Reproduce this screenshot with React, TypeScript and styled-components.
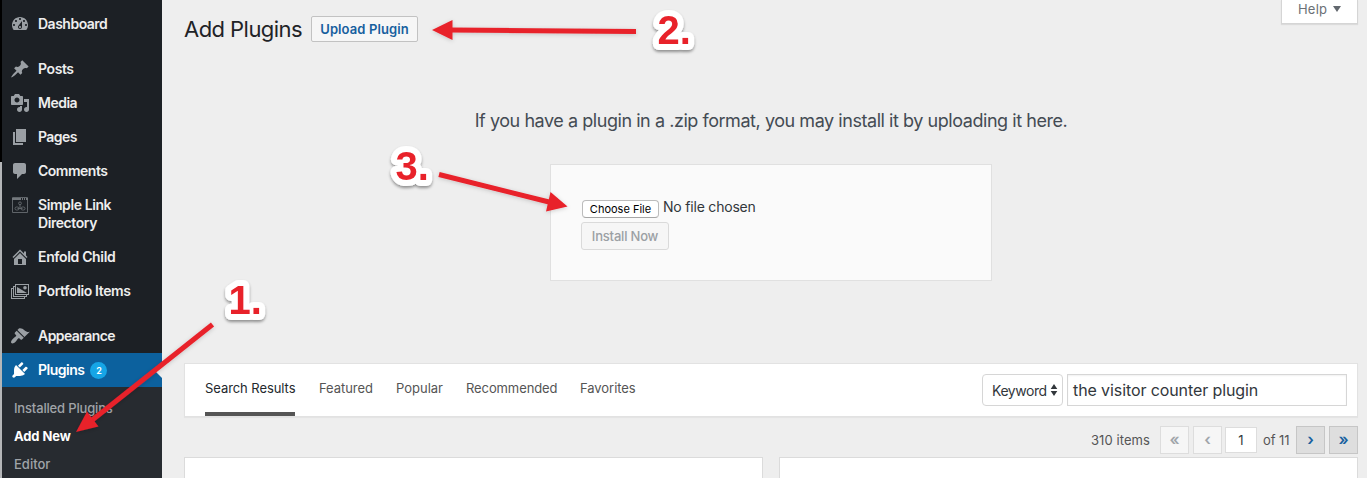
import React from "react";
import styled, { createGlobalStyle } from "styled-components";

const GlobalStyle = createGlobalStyle`
  * { box-sizing: border-box; }
  body {
    margin: 0;
    background: #fff;
    font-family: Inter, "Open Sans", sans-serif;
    font-size: 13px;
    color: #444;
    overflow: hidden;
  }
`;

const Screen = styled.div`
  position: relative;
  display: flex;
  width: 1367px;
  height: 478px;
  overflow: hidden;
  background: #eee;
`;

const Edge = styled.div`
  width: 2px;
  flex: none;
  background: linear-gradient(#000 0 162px, #b4b6b8 162px);
`;

const Sidebar = styled.nav`
  width: 160px;
  flex: none;
  padding-top: 7px;
  background: #1c2025;
`;

const MenuItem = styled.a<{ $active?: boolean; $gap?: boolean }>`
  position: relative;
  display: flex;
  margin-top: ${(p) => (p.$gap ? 11 : 0)}px;
  padding: 8px 0 8px 8px;
  line-height: 18px;
  font-size: 14px;
  font-weight: 600;
  color: ${(p) => (p.$active ? "#fff" : "#eee")};
  background: ${(p) => (p.$active ? "#0c619e" : "transparent")};
`;

const MenuIcon = styled.svg<{ $active?: boolean }>`
  flex: none;
  width: 20px;
  height: 20px;
  margin: -1px 8px -1px 0;
  fill: ${(p) => (p.$active ? "#fff" : "#9a9fa4")};
`;

const Label = styled.span<{ $ls?: number }>`
  white-space: pre-line;
  letter-spacing: ${(p) => p.$ls ?? 0}px;
`;

const Count = styled.span`
  width: 17px;
  height: 17px;
  margin: 1px 0 0 6px;
  border-radius: 50%;
  background: #16a5e6;
  color: #fff;
  font-size: 9px;
  font-weight: 600;
  line-height: 17px;
  text-align: center;
`;

const Notch = styled.span`
  position: absolute;
  right: 0;
  top: 9px;
  border: 8px solid transparent;
  border-right-color: #eee;
`;

const Submenu = styled.div`
  height: 91px;
  padding: 7px 0 0 12px;
  background: #272b30;
`;

const SubItem = styled.a<{ $current?: boolean; $ls: number }>`
  display: block;
  height: 28px;
  line-height: 28px;
  font-size: 13px;
  font-weight: ${(p) => (p.$current ? 700 : 500)};
  letter-spacing: ${(p) => p.$ls}px;
  color: ${(p) => (p.$current ? "#fff" : "#a0a4a8")};
`;

const Main = styled.main`
  flex: 1;
  display: flex;
  flex-direction: column;
  padding: 0 9px 0 22px;
`;

const Header = styled.header`
  display: flex;
  height: 164px;
  flex-direction: column;
`;

const TitleRow = styled.div`
  display: flex;
  height: 58px;
  align-items: flex-start;
`;

const Title = styled.h1`
  width: 127px;
  margin: 14px 0 0;
  font-size: 22px;
  font-weight: 400;
  line-height: 30px;
  letter-spacing: -0.55px;
  white-space: nowrap;
  color: #1f2327;
`;

const UploadButton = styled.button`
  width: 107px;
  height: 26px;
  margin: 16px auto 0 0;
  padding: 0;
  border: 1px solid #c2c2c2;
  border-radius: 2px;
  background: #f6f6f6;
  color: #17609e;
  font: 600 13px Inter, sans-serif;
  letter-spacing: 0.1px;
`;

const HelpTab = styled.button`
  display: flex;
  align-items: center;
  gap: 6px;
  width: 77px;
  height: 24px;
  padding: 0 0 5px 16px;
  border: 1px solid #d5d5d5;
  border-top: 0;
  background: #fff;
  box-shadow: 0 1px 1px rgba(0, 0, 0, 0.08);
  color: #6b7076;
  font: 400 13px Inter, sans-serif;
  letter-spacing: 0.2px;
`;

const Caret = styled.span`
  border: 4px solid transparent;
  border-top: 6px solid #62686e;
  border-bottom: 0;
`;

const Message = styled.p`
  margin: 50px 0 0;
  line-height: 26px;
  font-size: 18px;
  letter-spacing: -0.45px;
  text-align: center;
  white-space: nowrap;
  color: #444b53;
`;

const UploadBox = styled.section`
  width: 442px;
  height: 117px;
  flex: none;
  align-self: center;
  padding: 34px 30px;
  border: 1px solid #e0e0e0;
  background: #fafafa;
`;

const FileRow = styled.div`
  display: flex;
  height: 23px;
  padding: 1px 0 0 1px;
`;

const ChooseFile = styled.button`
  width: 77px;
  height: 18px;
  margin: 0 4px 0 0;
  padding: 0;
  border: 1px solid #bcbcbc;
  border-bottom-color: #a6a6a6;
  border-radius: 4px;
  background: #fff;
  color: #000;
  font: 400 11px/14px Inter, sans-serif;
`;

const FileName = styled.span`
  margin-top: -2px;
  line-height: 18px;
  font-size: 14px;
  letter-spacing: -0.2px;
  color: #32373c;
`;

const InstallButton = styled.button`
  display: block;
  width: 88px;
  height: 28px;
  margin: 0;
  padding: 0;
  border: 1px solid #dadada;
  border-radius: 3px;
  background: #f6f6f6;
  color: #9ba0a4;
  font: 500 13px Inter, sans-serif;
  letter-spacing: -0.2px;
`;

const FilterBar = styled.div`
  display: flex;
  align-items: flex-start;
  height: 54px;
  flex: none;
  margin-top: 82px;
  padding: 0 10px 0 20px;
  border: 1px solid #e2e2e2;
  background: #fff;
  box-shadow: 0 1px 1px rgba(0, 0, 0, 0.04);
`;

const Tab = styled.a<{ $current?: boolean; $w: number; $ls: number }>`
  width: ${(p) => p.$w}px;
  height: 52px;
  margin-right: 24px;
  line-height: 49px;
  white-space: nowrap;
  letter-spacing: ${(p) => p.$ls}px;
  color: ${(p) => (p.$current ? "#23282d" : "#555")};
  border-bottom: ${(p) => (p.$current ? "4px solid #555" : "0")};
`;

const KeywordSelect = styled.div`
  display: flex;
  align-items: center;
  justify-content: space-between;
  width: 81px;
  height: 32px;
  margin: 10px 4px 0 auto;
  padding: 0 4px 0 9px;
  border: 1px solid #d6d6d6;
  border-radius: 4px;
  background: #fff;
  font-size: 14px;
  letter-spacing: -0.45px;
  color: #32373c;
`;

const SearchField = styled.div`
  width: 280px;
  height: 32px;
  margin-top: 10px;
  padding-left: 5px;
  border: 1px solid #d6d6d6;
  background: #fff;
  box-shadow: inset 0 1px 2px rgba(0, 0, 0, 0.06);
  font-size: 16px;
  line-height: 30px;
  letter-spacing: -0.1px;
  color: #32373c;
`;

const Pager = styled.div`
  display: flex;
  align-items: center;
  justify-content: flex-end;
  height: 28px;
  margin: 9px 0 3px;
  color: #555;
`;

const PageButton = styled.span<{ $off?: boolean }>`
  width: 29px;
  height: 28px;
  margin-left: 4px;
  border: 1px solid ${(p) => (p.$off ? "#ddd" : "#c6c6c6")};
  background: ${(p) => (p.$off ? "#f6f6f6" : "#dedede")};
  color: ${(p) => (p.$off ? "#a0a5aa" : "#17609e")};
  font-size: 16px;
  font-weight: 600;
  line-height: 24px;
  text-align: center;
`;

const PageCount = styled.span`
  margin-right: 6px;
  letter-spacing: 0.08px;
`;

const PageInput = styled.span`
  width: 32px;
  height: 26px;
  margin: 0 6px 0 3px;
  border: 1px solid #ddd;
  background: #fff;
  line-height: 24px;
  text-align: center;
  color: #32373c;
`;

const PageTotal = styled.span`
  width: 29px;
  white-space: nowrap;
  letter-spacing: -0.1px;
`;

const Cards = styled.div`
  display: flex;
  gap: 16px;
  flex: 1;
`;

const Card = styled.article`
  flex: 1;
  border: 1px solid #dbdbdb;
  border-bottom: 0;
  background: #fff;
`;

const Annotations = styled.svg`
  position: absolute;
  inset: 0;
  pointer-events: none;
`;

const StepNumber = styled.text`
  font: 700 40px "Liberation Sans", Arial, sans-serif;
  paint-order: stroke;
  stroke: #fff;
  stroke-width: 12px;
  stroke-linejoin: round;
  fill: #e8202a;
`;

const ICONS = {
  dashboard:
    "M3.76 16h12.48c1.1-1.37 1.76-3.11 1.76-5 0-4.42-3.58-8-8-8s-8 3.58-8 8c0 1.89.66 3.63 1.76 5zM10 4c.55 0 1 .45 1 1s-.45 1-1 1-1-.45-1-1 .45-1 1-1zM6 6c.55 0 1 .45 1 1s-.45 1-1 1-1-.45-1-1 .45-1 1-1zm8 0c.55 0 1 .45 1 1s-.45 1-1 1-1-.45-1-1 .45-1 1-1zm-5.37 5.55L12 7v6c0 1.1-.9 2-2 2s-2-.9-2-2c0-.57.24-1.08.63-1.45zM4 10c.55 0 1 .45 1 1s-.45 1-1 1-1-.45-1-1 .45-1 1-1zm12 0c.55 0 1 .45 1 1s-.45 1-1 1-1-.45-1-1 .45-1 1-1zm-5 3c0-.55-.45-1-1-1s-1 .45-1 1 .45 1 1 1 1-.45 1-1z",
  post: "M10.44 3.02l1.82-1.82 6.36 6.35-1.83 1.82c-1.05-.68-2.48-.57-3.41.36l-.75.75c-.92.93-1.04 2.35-.35 3.41l-1.83 1.82-2.41-2.41-2.8 2.79c-.42.42-3.38 2.71-3.8 2.29s1.86-3.39 2.28-3.81l2.79-2.79L4.1 9.36l1.83-1.82c1.05.69 2.48.57 3.4-.36l.75-.75c.93-.92 1.05-2.35.36-3.41z",
  media:
    "M13 11V4c0-.55-.45-1-1-1h-1.67L9 1H5L3.67 3H2c-.55 0-1 .45-1 1v7c0 .55.45 1 1 1h10c.55 0 1-.45 1-1zM7 4.5c1.38 0 2.5 1.12 2.5 2.5S8.38 9.5 7 9.5 4.5 8.38 4.5 7 5.62 4.5 7 4.5zM14 6h5v10.5c0 1.38-1.12 2.5-2.5 2.5S14 17.88 14 16.5s1.12-2.5 2.5-2.5c.17 0 .34.02.5.05V9h-3V6zm-4 8.05V13h2v3.5c0 1.38-1.12 2.5-2.5 2.5S7 17.88 7 16.5 8.12 14 9.5 14c.17 0 .34.02.5.05z",
  page: "M6 15V2h10v13H6zm-1 1h8v2H3V5h2v11z",
  comments:
    "M5 2h9c1.1 0 2 .9 2 2v7c0 1.1-.9 2-2 2h-2l-5 5v-5H5c-1.1 0-2-.9-2-2V4c0-1.1.9-2 2-2z",
  home: "M16 8.5l1.53 1.53-1.06 1.06L10 4.6l-6.47 6.49-1.06-1.06L10 2.5l4 4v-2h2v4zm-6-2.46l6 5.99V18H4v-5.97zM12 17v-5H8v5h4z",
  images:
    "M5 3h14v11h-2v2h-2v2H1V7h2V5h2V3zm13 10V4H6v9h12zm-2 2v-1H5V6H4v9h12zm-2 2v-1H3V8H2v9h12zM7 6l10 6H7V6zm8-1a1.8 1.8 0 1 1 0 3.6 1.8 1.8 0 0 1 0-3.6z",
  appearance:
    "M14.48 11.06L7.41 3.99l1.5-1.5c.5-.56 2.3-.47 3.51.32 1.21.8 1.43 1.28 2.91 2.1 1.18.64 2.45 1.26 4.45.85zm-.71.71L6.7 4.7 4.93 6.47c-.39.39-.39 1.02 0 1.41l1.06 1.06c.39.39.39 1.03 0 1.42-.6.6-1.43 1.11-2.21 1.69-.35.26-.7.53-1.01.84C1.43 14.23.4 16.08 1.4 17.07c.99 1 2.84-.03 4.18-1.36.31-.31.58-.66.85-1.02.57-.78 1.08-1.61 1.69-2.21.39-.39 1.02-.39 1.41 0l1.06 1.06c.39.39 1.02.39 1.41 0z",
  plugins:
    "M13.11 4.36L9.87 7.6 8 5.73l3.24-3.24c.35-.34 1.05-.2 1.56.32.52.51.66 1.21.31 1.55zm-8 1.77l.91-1.12 9.01 9.01-1.19.84c-.71.71-2.63 1.16-3.82 1.16H6.14L4.9 17.26c-.59.59-1.54.59-2.12 0-.59-.58-.59-1.53 0-2.12l1.24-1.24v-3.88c0-1.13.4-3.19 1.09-3.89zm7.26 3.97l3.24-3.24c.34-.35 1.04-.21 1.55.31.52.51.66 1.21.31 1.55l-3.24 3.25z",
};

function DirectoryIcon() {
  return (
    <MenuIcon viewBox="0 0 20 20">
      <g fill="none" stroke="#5f6469">
        <path d="M2.5 2.5h15v15h-15z" />
        <path d="M2 4h16" stroke="#73787d" strokeWidth="2" strokeDasharray="9 1 1 1 1 1 2" />
        <circle cx="10" cy="8.3" r="1.4" />
        <path d="M10 10v3M7.5 13.5h5" />
        <rect x="5" y="12" width="4" height="3" rx="1.5" />
        <rect x="11" y="12" width="4" height="3" rx="1.5" />
      </g>
    </MenuIcon>
  );
}

type Entry = { label: string; icon: keyof typeof ICONS | null; ls: number; gap?: boolean };

const MENU: Entry[] = [
  { label: "Dashboard", icon: "dashboard", ls: -0.5 },
  { label: "Posts", icon: "post", ls: -0.4, gap: true },
  { label: "Media", icon: "media", ls: -0.5 },
  { label: "Pages", icon: "page", ls: -0.55 },
  { label: "Comments", icon: "comments", ls: -0.5 },
  { label: "Simple Link\nDirectory", icon: null, ls: -0.42 },
  { label: "Enfold Child", icon: "home", ls: -0.35 },
  { label: "Portfolio Items", icon: "images", ls: -0.38 },
  { label: "Appearance", icon: "appearance", ls: -0.55, gap: true },
];

const TABS = [
  { label: "Search Results", w: 90, ls: -0.07 },
  { label: "Featured", w: 53, ls: -0.05 },
  { label: "Popular", w: 46, ls: 0 },
  { label: "Recommended", w: 90, ls: -0.1 },
  { label: "Favorites", w: 55, ls: -0.05 },
];

export default function App() {
  return (
    <>
      <GlobalStyle />
      <Screen>
        <Edge />
        <Sidebar>
          {MENU.map((m) => (
            <MenuItem key={m.label} $gap={m.gap}>
              {m.icon ? (
                <MenuIcon viewBox="0 0 20 20">
                  <path fillRule="evenodd" d={ICONS[m.icon]} />
                </MenuIcon>
              ) : (
                <DirectoryIcon />
              )}
              <Label $ls={m.ls}>{m.label}</Label>
            </MenuItem>
          ))}
          <MenuItem $active>
            <MenuIcon $active viewBox="0 0 20 20">
              <path d={ICONS.plugins} />
            </MenuIcon>
            <Label $ls={-0.5}>Plugins</Label>
            <Count>2</Count>
            <Notch />
          </MenuItem>
          <Submenu>
            <SubItem $ls={-0.17}>Installed Plugins</SubItem>
            <SubItem $current $ls={-0.12}>Add New</SubItem>
            <SubItem $ls={0}>Editor</SubItem>
          </Submenu>
        </Sidebar>
        <Main>
          <Header>
            <TitleRow>
              <Title>Add Plugins</Title>
              <UploadButton>Upload Plugin</UploadButton>
              <HelpTab>
                Help <Caret />
              </HelpTab>
            </TitleRow>
            <Message>
              If you have a plugin in a .zip format, you may install it by uploading it here.
            </Message>
          </Header>
          <UploadBox>
            <FileRow>
              <ChooseFile>Choose File</ChooseFile>
              <FileName>No file chosen</FileName>
            </FileRow>
            <InstallButton>Install Now</InstallButton>
          </UploadBox>
          <FilterBar>
            {TABS.map((t, i) => (
              <Tab key={t.label} $current={i === 0} $w={t.w} $ls={t.ls}>
                {t.label}
              </Tab>
            ))}
            <KeywordSelect>
              Keyword
              <svg width="8" height="12" viewBox="0 0 8 12" fill="#32373c">
                <path d="M4 0l3.300 5H.7zM4 12L.7 7h6.600z" />
              </svg>
            </KeywordSelect>
            <SearchField>the visitor counter plugin</SearchField>
          </FilterBar>
          <Pager>
            <PageCount>310 items</PageCount>
            <PageButton $off>«</PageButton>
            <PageButton $off>‹</PageButton>
            <PageInput>1</PageInput>
            <PageTotal>of 11</PageTotal>
            <PageButton>›</PageButton>
            <PageButton>»</PageButton>
          </Pager>
          <Cards>
            <Card />
            <Card />
          </Cards>
        </Main>
        <Annotations width="1367" height="478">
          <defs>
            <filter id="lift" x="-30%" y="-30%" width="160%" height="170%">
              <feDropShadow dx="0" dy="2" stdDeviation="1.8" floodOpacity="0.4" />
            </filter>
            <filter id="soft" filterUnits="userSpaceOnUse" x="0" y="0" width="1367" height="478">
              <feDropShadow dx="0" dy="1" stdDeviation="2" floodOpacity="0.18" />
            </filter>
          </defs>
          <g filter="url(#soft)" fill="#e8202a" stroke="#e8202a">
            <path d="M212.5 324.5L91 421" strokeWidth="5" />
            <path d="M76 432l11-20.500 11.500 15z" stroke="none" />
            <path d="M636 31.500L450 30" strokeWidth="5" />
            <path d="M432 30l20.500-10v20z" stroke="none" />
            <path d="M439 174.500L549 202" strokeWidth="5" />
            <path d="M567.500 206.500L550.500 192l-4.500 19.500z" stroke="none" />
          </g>
          <g filter="url(#lift)">
            <StepNumber x="228.500" y="314">1.</StepNumber>
          </g>
          <g filter="url(#lift)">
            <StepNumber x="657.500" y="44">2.</StepNumber>
          </g>
          <g filter="url(#lift)">
            <StepNumber x="395.500" y="179.500">3.</StepNumber>
          </g>
        </Annotations>
      </Screen>
    </>
  );
}
